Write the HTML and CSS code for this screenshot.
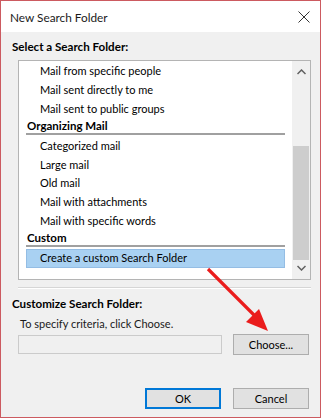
FILE: index.html
```html
<!DOCTYPE html>
<html lang="en">
<head>
  <meta charset="UTF-8" />
  <title>New Search Folder</title>
  <link rel="stylesheet" href="styles.css">
</head>
<body>
  <div class="window">
    <div class="titlebar">
      <span class="title">New Search Folder</span>
      <svg class="close" width="12" height="12" viewBox="0 0 12 12">
        <path d="M0.5 0.5 L11.5 11.5 M11.5 0.5 L0.5 11.5" stroke="#333" stroke-width="1" fill="none"/>
      </svg>
    </div>

    <div class="content">
      <div class="label">Select a Search Folder:</div>

      <div class="listbox">
        <div class="list">
          <div class="item">Mail from specific people</div>
          <div class="item">Mail sent directly to me</div>
          <div class="item">Mail sent to public groups</div>
          <div class="group">Organizing Mail</div>
          <div class="item">Categorized mail</div>
          <div class="item">Large mail</div>
          <div class="item">Old mail</div>
          <div class="item">Mail with attachments</div>
          <div class="item">Mail with specific words</div>
          <div class="group">Custom</div>
          <div class="item selected">Create a custom Search Folder</div>
        </div>
        <div class="scrollbar">
          <svg class="arrow" width="9" height="6" viewBox="0 0 9 6">
            <path d="M0.5 5 L4.5 1 L8.5 5" stroke="#606060" stroke-width="1.5" fill="none"/>
          </svg>
          <div class="track"><div class="thumb"></div></div>
          <svg class="arrow" width="9" height="6" viewBox="0 0 9 6">
            <path d="M0.5 1 L4.5 5 L8.5 1" stroke="#606060" stroke-width="1.5" fill="none"/>
          </svg>
        </div>
      </div>

      <div class="divider"></div>

      <div class="label">Customize Search Folder:</div>
      <div class="hint">To specify criteria, click Choose.</div>
      <div class="choose-row">
        <div class="field"></div>
        <button class="btn">Choose...</button>
      </div>

      <div class="actions">
        <button class="btn default">OK</button>
        <button class="btn">Cancel</button>
      </div>
    </div>

    <svg class="pointer" width="322" height="419" viewBox="0 0 322 419">
      <line x1="208" y1="269" x2="258" y2="319" stroke="#ea1c1c" stroke-width="3.2"/>
      <polygon points="268,331 246,322 259,309" fill="#ea1c1c"/>
    </svg>
  </div>
</body>
</html>
```

FILE: styles.css
```css
body {
  margin: 0;
  font-family: Lato, "Open Sans", sans-serif;
  font-size: 11px;
  color: #000;
}
.window {
  position: relative;
  width: 319px;
  height: 416px;
  border: 1px solid #cc5a60;
  background-color: #f0f0f0;
  display: flex;
  flex-direction: column;
}
.titlebar {
  height: 31px;
  background-color: #fff;
  display: flex;
  align-items: center;
  justify-content: space-between;
  padding: 0 10px 0 9px;
}
.title {
  font-size: 11.8px;
  color: #1a1a1a;
  margin-top: 1px;
}
.close {
  margin-top: 1px;
}
.content {
  flex: 1;
  display: flex;
  flex-direction: column;
  padding: 0 9px 0 17px;
}
.label {
  font-weight: bold;
  font-size: 11.6px;
  line-height: 16px;
  margin-left: -6px;
}
.content > .label:first-child {
  margin-top: 7px;
}
.listbox {
  margin-top: 5px;
  height: 218px;
  border: 1px solid #b4b4b4;
  background-color: #fff;
  display: flex;
}
.list {
  flex: 1;
  padding-top: 1.4px;
  overflow: hidden;
}
.item {
  line-height: 18.6px;
  padding-left: 21px;
  white-space: nowrap;
}
.group {
  font-weight: bold;
  font-size: 11.5px;
  line-height: 15px;
  margin: 0 7px 2px 7px;
  padding-left: 1px;
  border-bottom: 2px solid #a0a0a0;
}
.item.selected {
  margin: 0 7px;
  padding-left: 13px;
  line-height: 16.6px;
  background-color: #a9d1f2;
  border: 1px solid #94bde4;
}
.scrollbar {
  width: 18px;
  background-color: #f0f0f0;
  display: flex;
  flex-direction: column;
  align-items: center;
}
.arrow {
  margin: 8px 0 5px;
}
.scrollbar .arrow:last-child {
  margin: 5px 0 8px;
}
.track {
  flex: 1;
  width: 100%;
  display: flex;
  flex-direction: column;
  justify-content: flex-end;
}
.thumb {
  height: 114px;
  margin: 0 1px 0 1px;
  background-color: #cdcdcd;
}
.divider {
  margin-top: 7px;
  height: 1px;
  background-color: #d6d6d6;
  border-bottom: 1px solid #fff;
}
.divider + .label {
  margin-top: 7px;
}
.hint {
  line-height: 16px;
  margin-top: 4px;
  margin-left: 2px;
  color: #1a1a1a;
}
.choose-row {
  display: flex;
  align-items: center;
  gap: 11px;
  margin-top: 2px;
  padding-right: 2px;
}
.field {
  flex: 1;
  height: 17px;
  border: 1px solid #cbcbcb;
  background-color: #f0f0f0;
}
.btn {
  width: 76px;
  height: 21px;
  font-family: inherit;
  font-size: 11px;
  color: #000;
  background-color: #e1e1e1;
  border: 1px solid #adadad;
  padding: 0;
}
.btn.default {
  border: 2px solid #0078d7;
}
.actions {
  display: flex;
  justify-content: flex-end;
  gap: 12px;
  margin-top: 33px;
  padding-right: 2px;
}
.pointer {
  position: absolute;
  left: -1px;
  top: -1px;
  pointer-events: none;
}
```
